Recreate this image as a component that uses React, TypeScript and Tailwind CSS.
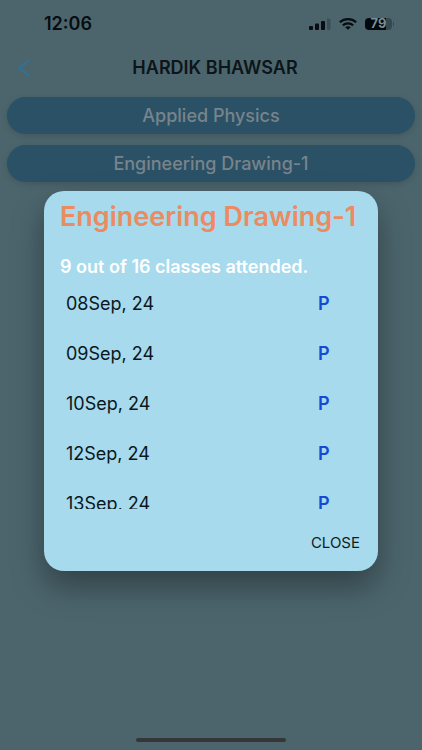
const subjects = ["Applied Physics", "Engineering Drawing-1"]

const attendance = [
    { date: "08Sep, 24", status: "P" },
    { date: "09Sep, 24", status: "P" },
    { date: "10Sep, 24", status: "P" },
    { date: "12Sep, 24", status: "P" },
    { date: "13Sep, 24", status: "P" },
]

function StatusBar() {
    return (
        <div className="flex h-12 items-center justify-between pr-7 pl-11 text-[#070d12]">
            <span className="text-lg font-semibold">12:06</span>
            <div className="flex items-center gap-2">
                {/* Signal */}
                <svg width="22" height="12" viewBox="0 0 22 12" fill="currentColor">
                    <rect x="0" y="8" width="4" height="4" rx="1" />
                    <rect x="6" y="5.5" width="4" height="6.5" rx="1" />
                    <rect x="12" y="3" width="4" height="9" rx="1" />
                    <rect x="18" y="0.5" width="3.5" height="11.5" rx="1" fill="#3b4f57" />
                </svg>
                {/* Wifi */}
                <svg width="18" height="12" viewBox="0 0 18 12" fill="none" stroke="currentColor" strokeWidth="2.2">
                    <path d="M0.8 4.2C5.4 0.1 12.6 0.1 17.2 4.2" />
                    <path d="M3.8 7.3C6.8 4.7 11.2 4.7 14.2 7.3" />
                    <path d="M6.2 9.2C7.8 7.8 10.2 7.8 11.8 9.2L9 11.8Z" fill="currentColor" stroke="none" />
                </svg>
                {/* Battery */}
                <div className="flex items-center gap-px">
                    <div className="flex h-3 w-[27px] items-center justify-center rounded bg-linear-to-r from-[#03080b] from-79% to-[#354850] to-79% text-[13px] font-bold text-[#788f96]">
                        79
                    </div>
                    <div className="h-1 w-px rounded-r bg-[#354850]" />
                </div>
            </div>
        </div>
    )
}

function Header() {
    return (
        <header className="flex h-10 items-center px-4">
            <button type="button" aria-label="Back" className="w-6">
                <svg width="16" height="20" viewBox="0 0 16 20" fill="none" stroke="#35708f" strokeWidth="2.2">
                    <path d="M14 2L2.8 10L14 18" />
                </svg>
            </button>
            <h1 className="flex-1 pr-4 text-center text-lg font-semibold text-[#0c1519]">HARDIK BHAWSAR</h1>
        </header>
    )
}

function AttendanceDialog() {
    return (
        <div className="absolute inset-0 flex items-center justify-center px-11 pt-3">
            <div
                role="dialog"
                aria-labelledby="subject"
                className="w-full rounded-[20px] bg-[#a6daec] px-4 pt-2 pb-4 shadow-[0_16px_32px_rgba(0,0,0,0.35)]"
            >
                <h2 id="subject" className="text-[27px] leading-9 font-semibold whitespace-nowrap text-[#ec8a61]">Engineering Drawing-1</h2>
                <p className="mt-5 text-lg leading-6 font-semibold whitespace-nowrap text-white">9 out of 16 classes attended.</p>
                <div className="h-[230px] overflow-y-auto [scrollbar-width:none]">
                    <table className="w-full text-left text-lg">
                        <tbody>
                            {attendance.map((row) => (
                                <tr key={row.date} className="h-[50px]">
                                    <td className="pl-1.5 text-[#0b171d]">{row.date}</td>
                                    <td className="w-11 font-semibold text-[#174ad4]">{row.status}</td>
                                </tr>
                            ))}
                        </tbody>
                    </table>
                </div>
                <div className="flex justify-end pt-[22px]">
                    <button type="button" className="px-0.5 text-[15px] leading-6 text-[#101d23]">CLOSE</button>
                </div>
            </div>
        </div>
    )
}

export default function App() {
    return (
        <div className="relative flex min-h-screen flex-col bg-[#4c656d] font-[Inter,sans-serif]">
            <StatusBar />
            <Header />
            <main className="flex flex-1 flex-col gap-[11px] px-[7px] pt-[9px]">
                {subjects.map((subject) => (
                    <button
                        key={subject}
                        type="button"
                        className="h-[37px] rounded-full bg-[#2b5166] text-lg font-medium text-[#78848b] shadow-[0_2px_6px_rgba(0,0,0,0.15)]"
                    >
                        {subject}
                    </button>
                ))}
            </main>
            <div className="mx-auto mb-2 h-1 w-[150px] rounded-full bg-[#343639]" />
            <AttendanceDialog />
        </div>
    )
}
